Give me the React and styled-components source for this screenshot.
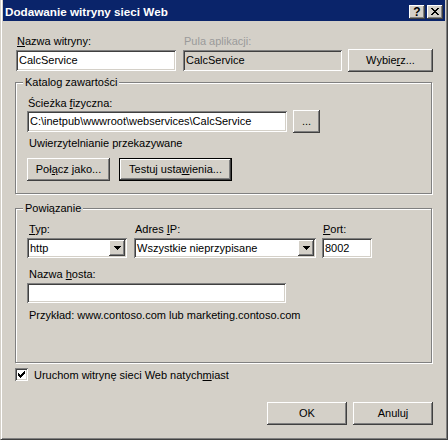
import React from 'react';
import styled, { createGlobalStyle, css } from 'styled-components';

const face = '#D4D0C8';

const GlobalStyle = createGlobalStyle`
  html, body {
    margin: 0;
    padding: 0;
    background: ${face};
  }
  body {
    font-family: 'Liberation Sans', Arial, sans-serif;
    font-size: 11px;
    color: #000;
  }
`;

const raised = css`
  box-shadow: inset -1px -1px #404040, inset 1px 1px #fff, inset -2px -2px #808080, inset 2px 2px ${face};
`;

const sunken = css`
  box-shadow: inset 1px 1px #808080, inset -1px -1px #fff, inset 2px 2px #404040, inset -2px -2px ${face};
`;

const Window = styled.div`
  width: 448px;
  height: 440px;
  box-sizing: border-box;
  background: ${face};
  border-left: 1px solid ${face};
  border-right: 1px solid #404040;
  border-bottom: 1px solid #404040;
  box-shadow: inset 1px 0 #fff, inset -1px -1px #808080;
  padding: 0 2px 2px 2px;
  display: flex;
  flex-direction: column;
`;

const TitleBar = styled.div`
  height: 21px;
  flex: none;
  background: #0A246A;
  color: #fff;
  font-weight: bold;
  font-size: 11.7px;
  display: flex;
  align-items: center;
  padding: 0 2px 0 2px;
`;

const TitleText = styled.span`
  flex: 1;
  line-height: 13px;
  margin-top: 2px;
`;

const CaptionButton = styled.div`
  width: 16px;
  height: 14px;
  margin-left: 2px;
  margin-top: 2px;
  background: ${face};
  ${raised};
  display: flex;
  align-items: center;
  justify-content: center;
  color: #000;
  font-weight: bold;
  font-size: 12px;
  line-height: 14px;
`;

const Content = styled.div`
  flex: 1;
  display: flex;
  flex-direction: column;
  padding: 14px 12px 12px 12px;
`;

const TopRow = styled.div`
  display: flex;
  align-items: flex-start;
  padding-left: 1px;
`;

const Field = styled.div`
  width: ${p => p.w}px;
  display: flex;
  flex-direction: column;
  margin-right: ${p => p.gap || 0}px;
`;

const Label = styled.div`
  line-height: 13px;
  height: 13px;
  white-space: nowrap;
  color: ${p => (p.disabled ? '#9a9a9a' : '#000')};
  padding-left: ${p => p.indent || 1}px;
  margin-bottom: ${p => p.mb ?? 2}px;
  margin-top: ${p => p.mt || 0}px;
`;

const Input = styled.div`
  width: ${p => p.w}px;
  height: ${p => p.h || 21}px;
  box-sizing: border-box;
  background: ${p => (p.disabled ? face : '#fff')};
  ${sunken};
  padding: 0 3px;
  display: flex;
  align-items: center;
  line-height: 13px;
  white-space: nowrap;
  overflow: hidden;
`;

const Button = styled.div`
  width: ${p => p.w}px;
  height: 23px;
  box-sizing: border-box;
  background: ${face};
  ${raised};
  ${p => p.isDefault && css`
    border: 1px solid #000;
    box-shadow: inset -1px -1px #404040, inset 1px 1px #fff, inset -2px -2px #808080;
  `}
  display: flex;
  align-items: center;
  justify-content: center;
  line-height: 13px;
  white-space: nowrap;
  margin-top: ${p => p.mt || 0}px;
  margin-left: ${p => p.ml || 0}px;
`;

const Group = styled.div`
  position: relative;
  border: 1px solid #808080;
  box-shadow: inset 1px 1px #fff, 1px 1px #fff;
  margin-right: 1px;
  margin-top: ${p => p.mt}px;
  padding: ${p => p.pad};
  display: flex;
  flex-direction: column;
`;

const GroupTitle = styled.span`
  position: absolute;
  top: -7px;
  left: 7px;
  padding: 0 2px;
  background: ${face};
  line-height: 13px;
`;

const Row = styled.div`
  display: flex;
  align-items: ${p => p.align || 'center'};
  margin-top: ${p => p.mt || 0}px;
`;

const Select = styled.div`
  width: ${p => p.w}px;
  height: 20px;
  box-sizing: border-box;
  background: #fff;
  ${sunken};
  padding: 2px 2px 2px 3px;
  display: flex;
  align-items: center;
  line-height: 13px;
`;

const SelectValue = styled.span`
  flex: 1;
  white-space: nowrap;
`;

const ArrowButton = styled.div`
  width: 16px;
  height: 16px;
  background: ${face};
  ${raised};
  display: flex;
  align-items: center;
  justify-content: center;
`;

const CheckRow = styled.div`
  display: flex;
  align-items: center;
  margin-top: 5px;
`;

const CheckBox = styled.div`
  width: 13px;
  height: 13px;
  box-sizing: border-box;
  background: #fff;
  ${sunken};
  display: flex;
  align-items: center;
  justify-content: center;
  margin-right: 6px;
`;

const Footer = styled.div`
  margin-top: auto;
  display: flex;
  justify-content: flex-end;
`;

const U = styled.span`
  text-decoration: underline;
`;

const DownArrow = () => (
  <svg width="7" height="4" viewBox="0 0 7 4" shapeRendering="crispEdges">
    <path d="M0 0h7v1H0zM1 1h5v1H1zM2 2h3v1H2zM3 3h1v1H3z" fill="#000" />
  </svg>
);

const CheckMark = () => (
  <svg width="7" height="7" viewBox="0 0 7 7" shapeRendering="crispEdges">
    <path d="M6 0h1v3H6zM5 1h1v3H5zM4 2h1v3H4zM0 2h1v3H0zM1 3h1v3H1zM2 4h1v3H2zM3 3h1v3H3z" fill="#000" />
  </svg>
);

const CloseGlyph = () => (
  <svg width="8" height="7" viewBox="0 0 8 7" shapeRendering="crispEdges">
    <path d="M0 0h2v1H0zM6 0h2v1H6zM1 1h2v1H1zM5 1h2v1H5zM2 2h4v1H2zM3 3h2v1H3zM2 4h4v1H2zM1 5h2v1H1zM5 5h2v1H5zM0 6h2v1H0zM6 6h2v1H6z" fill="#000" />
  </svg>
);

export default function App() {
  return (
    <>
      <GlobalStyle />
      <Window>
        <TitleBar>
          <TitleText>Dodawanie witryny sieci Web</TitleText>
          <CaptionButton>?</CaptionButton>
          <CaptionButton>
            <CloseGlyph />
          </CaptionButton>
        </TitleBar>
        <Content>
          <TopRow>
            <Field w={160} gap={7}>
              <Label><U>N</U>azwa witryny:</Label>
              <Input w={160}>CalcService</Input>
            </Field>
            <Field w={159} gap={6}>
              <Label disabled>Pula aplikacji:</Label>
              <Input w={159} disabled>CalcService</Input>
            </Field>
            <Button w={85} mt={14}>Wybie<U>r</U>z...</Button>
          </TopRow>

          <Group mt={10} pad="14px 10px 12px 11px">
            <GroupTitle>Katalog zawartości</GroupTitle>
            <Label mb={0}>Ścieżka <U>f</U>izyczna:</Label>
            <Row>
              <Input w={260}>C:\inetpub\wwwroot\webservices\CalcService</Input>
              <Button w={27} ml={6}>...</Button>
            </Row>
            <Label mt={4} indent={2}>Uwierzytelnianie przekazywane</Label>
            <Row mt={6}>
              <Button w={83}>Poł<U>ą</U>cz jako...</Button>
              <Button w={113} ml={9} isDefault>Testuj usta<U>w</U>ienia...</Button>
            </Row>
          </Group>

          <Group mt={14} pad="14px 10px 38px 11px">
            <GroupTitle>Powiązanie</GroupTitle>
            <Row align="flex-start">
              <Field w={100} gap={7}>
                <Label indent={2}><U>T</U>yp:</Label>
                <Select w={100}>
                  <SelectValue>http</SelectValue>
                  <ArrowButton><DownArrow /></ArrowButton>
                </Select>
              </Field>
              <Field w={182} gap={6}>
                <Label>Adres <U>I</U>P:</Label>
                <Select w={182}>
                  <SelectValue>Wszystkie nieprzypisane</SelectValue>
                  <ArrowButton><DownArrow /></ArrowButton>
                </Select>
              </Field>
              <Field w={50}>
                <Label><U>P</U>ort:</Label>
                <Input w={50} h={20}>8002</Input>
              </Field>
            </Row>
            <Label mt={10} indent={2}>Nazwa <U>h</U>osta:</Label>
            <Input w={259} h={20} />
            <Label mt={6} indent={2}>Przykład: www.contoso.com lub marketing.contoso.com</Label>
          </Group>

          <CheckRow>
            <CheckBox><CheckMark /></CheckBox>
            <span>Uruchom witrynę sieci Web natych<U>m</U>iast</span>
          </CheckRow>

          <Footer>
            <Button w={80}>OK</Button>
            <Button w={80} ml={6}>Anuluj</Button>
          </Footer>
        </Content>
      </Window>
    </>
  );
}
